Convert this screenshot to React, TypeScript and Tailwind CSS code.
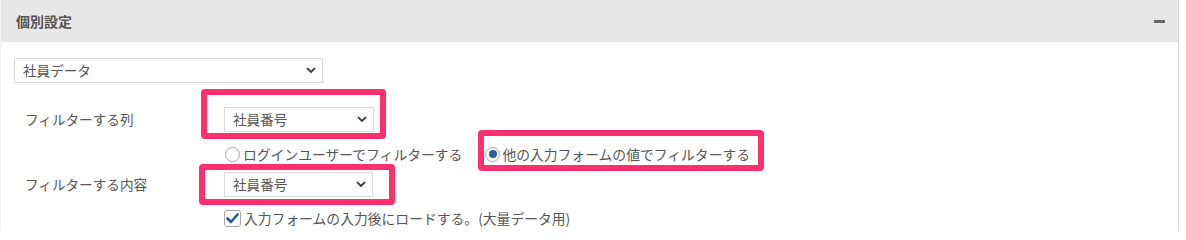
import React from "react";

const font = { fontFamily: '"Noto Sans CJK JP", "Noto Sans", sans-serif' };

function Chevron() {
  return (
    <svg width="10" height="7" viewBox="0 0 10 7" className="shrink-0">
      <polyline points="1.5,1.5 5,5 8.5,1.5" fill="none" stroke="#444" strokeWidth="1.8" strokeLinecap="round" strokeLinejoin="round" />
    </svg>
  );
}

function Select({ label, w }: { label: string; w: string }) {
  return (
    <div className={`${w} h-[25px] border border-[#dcdcdc] bg-white flex items-center justify-between pl-[8px] pr-[6px] text-[13.6px] text-[#555]`}>
      <span>{label}</span>
      <Chevron />
    </div>
  );
}

export default function App() {
  return (
    <div className="relative w-[1179px] h-[231px] border-l border-r border-l-[#f4f4f4] border-r-[#d8d8d8] bg-white overflow-hidden" style={font}>
      <div className="h-[42px] bg-[#e8e8e8] flex items-center justify-between pl-[15px] pr-[13px]">
        <span className="text-[14px] font-bold text-[#555]">個別設定</span>
        <div className="w-[11px] h-[3px] bg-[#666]" />
      </div>
      <div className="pl-[13px] pt-[16px]">
        <Select label="社員データ" w="w-[309px]" />
        <div className="mt-[24px] flex items-center">
          <div className="w-[210px] pl-[11px] text-[13.6px] text-[#555]">フィルターする列</div>
          <Select label="社員番号" w="w-[150px]" />
        </div>
        <div className="mt-[12px] h-[20px] flex items-center pl-[211px] text-[13.8px] text-[#555]">
          <span className="w-[15px] h-[15px] rounded-full border-[1.5px] border-[#a8a8a8] bg-white shrink-0" />
          <span className="ml-[3px]">ログインユーザーでフィルターする</span>
          <span className="ml-[23px] w-[15px] h-[15px] rounded-full border-[1.5px] border-[#a8a8a8] bg-white shrink-0 flex items-center justify-center">
            <span className="w-[8px] h-[8px] rounded-full bg-[#2d5f96]" />
          </span>
          <span className="ml-[2px]">他の入力フォームの値でフィルターする</span>
        </div>
        <div className="mt-[8px] flex items-center">
          <div className="w-[210px] pl-[11px] text-[13.6px] text-[#555]">フィルターする内容</div>
          <Select label="社員番号" w="w-[149px]" />
        </div>
        <div className="mt-[12px] h-[18px] flex items-center pl-[210px] text-[13.8px] text-[#555]">
          <span className="w-[17px] h-[17px] rounded-[3px] border-[1.5px] border-[#a8a8a8] bg-white shrink-0 flex items-center justify-center">
            <svg width="13" height="11" viewBox="0 0 13 11">
              <polyline points="1.5,5.5 5,9 11.5,1.5" fill="none" stroke="#2a5a90" strokeWidth="2.6" strokeLinecap="round" strokeLinejoin="round" />
            </svg>
          </span>
          <span className="ml-[3px]">入力フォームの入力後にロードする。(大量データ用)</span>
        </div>
      </div>
      <div className="absolute left-[200px] top-[89px] w-[185px] h-[50px] border-[6px] border-[#fe2f6e] rounded-[4px]" />
      <div className="absolute left-[477px] top-[130px] w-[286px] h-[41px] border-[6px] border-[#fe2f6e] rounded-[4px]" />
      <div className="absolute left-[198px] top-[164px] w-[196px] h-[41px] border-[6px] border-[#fe2f6e] rounded-[4px]" />
    </div>
  );
}
